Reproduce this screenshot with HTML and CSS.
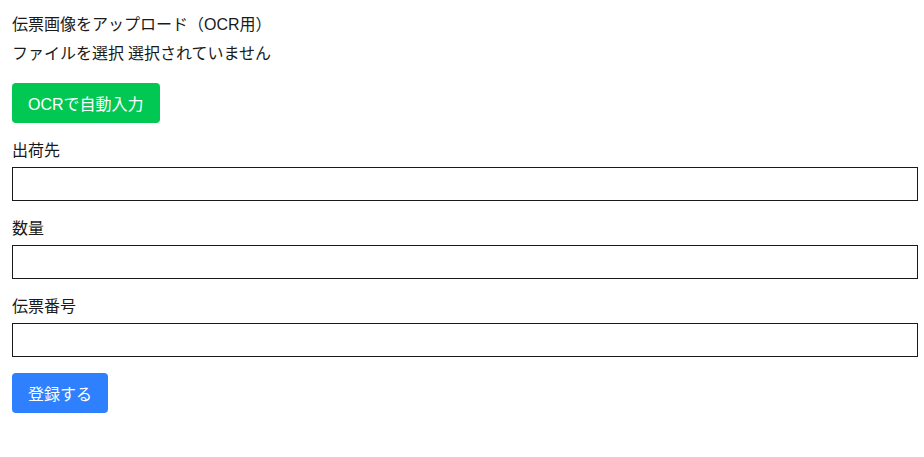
FILE: index.html
```html
<!DOCTYPE html>
<html lang="ja">
<head>
    <meta charset="UTF-8">
    <meta name="viewport" content="width=device-width, initial-scale=1.0">
    <title>伝票登録</title>
    <link rel="stylesheet" href="styles.css">
</head>
<body>
    <form class="slip-form" onsubmit="return false;">
        <div class="upload">
            <div class="upload-title">伝票画像をアップロード（OCR用）</div>
            <label class="file-picker">
                <input type="file" accept="image/*" class="file-input">
                <span class="file-btn">ファイルを選択</span>
                <span class="file-name">選択されていません</span>
            </label>
        </div>

        <button type="button" class="btn btn-ocr">OCRで自動入力</button>

        <label class="field-label" for="dest">出荷先</label>
        <input type="text" id="dest" class="field-input">

        <label class="field-label" for="qty">数量</label>
        <input type="text" id="qty" class="field-input">

        <label class="field-label" for="slip">伝票番号</label>
        <input type="text" id="slip" class="field-input">

        <button type="submit" class="btn btn-submit">登録する</button>
    </form>
</body>
</html>
```

FILE: styles.css
```css
body {
    margin: 0;
    padding: 13px 6px 20px 12px;
    font-family: "Liberation Sans", "Noto Sans CJK JP", sans-serif;
    font-size: 16px;
    line-height: 24px;
    color: #1a1a1a;
    background: #fff;
}
.slip-form {
    display: flex;
    flex-direction: column;
    align-items: flex-start;
}
.upload {
    display: flex;
    flex-direction: column;
    gap: 5px;
}
.file-picker {
    display: flex;
    gap: 4px;
    cursor: pointer;
}
.file-input {
    display: none;
}
.btn {
    height: 40px;
    padding: 0 16px;
    border: none;
    border-radius: 4px;
    color: #fff;
    font-family: inherit;
    font-size: 16px;
    cursor: pointer;
}
.btn-ocr {
    margin-top: 17px;
    background: #00c853;
}
.btn-submit {
    margin-top: 16px;
    background: #2f80ff;
}
.field-label {
    margin-top: 16px;
    margin-bottom: 4px;
}
.field-input {
    width: 100%;
    height: 34px;
    box-sizing: border-box;
    border: 1px solid #1a1a1a;
    border-radius: 0;
    padding: 4px 8px;
    font-family: inherit;
    font-size: 16px;
}
```
